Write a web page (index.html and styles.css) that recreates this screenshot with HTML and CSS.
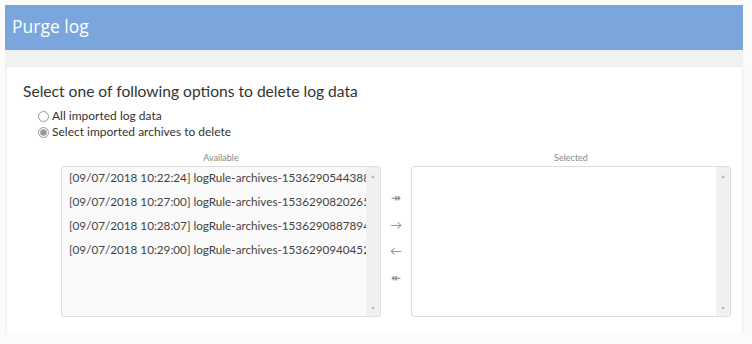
FILE: index.html
```html
<!DOCTYPE html>
<html lang="en">
<head>
    <meta charset="UTF-8">
    <title>Purge log</title>
    <link rel="stylesheet" href="styles.css">
</head>
<body>
    <div class="page">
        <div class="title-bar">Purge log</div>
        <div class="strip"></div>
        <div class="panel">
            <h2 class="question">Select one of following options to delete log data</h2>
            <label class="option"><input type="radio" name="mode"> All imported log data</label>
            <label class="option"><input type="radio" name="mode" checked> Select imported archives to delete</label>

            <div class="picker">
                <div class="list-col">
                    <div class="list-label">Available</div>
                    <div class="listbox">
                        <div class="items">
                            <div class="item">[09/07/2018 10:22:24] logRule-archives-1536290544388</div>
                            <div class="item">[09/07/2018 10:27:00] logRule-archives-1536290820265</div>
                            <div class="item">[09/07/2018 10:28:07] logRule-archives-1536290887894</div>
                            <div class="item">[09/07/2018 10:29:00] logRule-archives-1536290940452</div>
                        </div>
                        <div class="scroll"><span class="up">&#9650;</span><span class="down">&#9660;</span></div>
                    </div>
                </div>
                <div class="moves">
                    <span>&#8608;</span>
                    <span>&#8594;</span>
                    <span>&#8592;</span>
                    <span>&#8606;</span>
                </div>
                <div class="list-col">
                    <div class="list-label">Selected</div>
                    <div class="listbox">
                        <div class="items"></div>
                        <div class="scroll"><span class="up">&#9650;</span><span class="down">&#9660;</span></div>
                    </div>
                </div>
            </div>
        </div>
    </div>
</body>
</html>
```

FILE: styles.css
```css
body {
    margin: 0;
    background: #fbfbf9;
    font-family: 'Lato', 'Open Sans', sans-serif;
    color: #333;
}

.page {
    width: 738px;
    margin: 5px 0 0 5px;
}

.title-bar {
    height: 45px;
    background: #7aa6dd;
    color: #fff;
    font-family: 'Open Sans', sans-serif;
    font-size: 17.5px;
    line-height: 42px;
    padding-left: 7px;
    box-sizing: border-box;
}

.strip {
    height: 17px;
    background: #f1f1f1;
}

.panel {
    margin: 0 1px 0 2px;
    height: 266px;
    background: #fff;
    box-shadow: 0 1px 3px rgba(0, 0, 0, 0.12);
    padding: 14px 0 0 16px;
    box-sizing: border-box;
}

.question {
    margin: 0 0 6px 0;
    font-size: 15.6px;
    font-weight: 400;
    color: #333;
    line-height: 21px;
}

.option {
    display: flex;
    align-items: center;
    gap: 3px;
    margin-left: 15px;
    font-size: 12px;
    line-height: 16px;
    color: #333;
}

.option input {
    margin: 0;
    width: 11px;
    height: 11px;
    accent-color: #777;
    opacity: 0.75;
}

.picker {
    display: flex;
    margin: 13px 0 0 38px;
    align-items: flex-start;
}

.list-col {
    width: 320px;
}

.list-label {
    text-align: center;
    font-size: 9px;
    color: #888;
    line-height: 10px;
    margin-bottom: 3px;
}

.listbox {
    height: 151px;
    border: 1px solid #ddd;
    border-radius: 3px;
    background: #fafafa;
    display: flex;
    overflow: hidden;
    box-sizing: border-box;
}

.list-col:last-child .listbox {
    background: #fff;
}

.items {
    flex: 1;
    overflow: hidden;
    margin-top: -2px;
}

.item {
    white-space: nowrap;
    overflow: hidden;
    font-size: 11.7px;
    line-height: 24px;
    padding-left: 7px;
    color: #444;
}

.scroll {
    width: 14px;
    background: #f0f0f0;
    display: flex;
    flex-direction: column;
    justify-content: space-between;
    align-items: center;
    font-size: 5px;
    color: #aaa;
    padding: 6px 0 5px;
}

.moves {
    width: 30px;
    display: flex;
    flex-direction: column;
    align-items: center;
    gap: 10.5px;
    padding-top: 37px;
    font-size: 12px;
    color: #888;
    line-height: 16px;
}
```
